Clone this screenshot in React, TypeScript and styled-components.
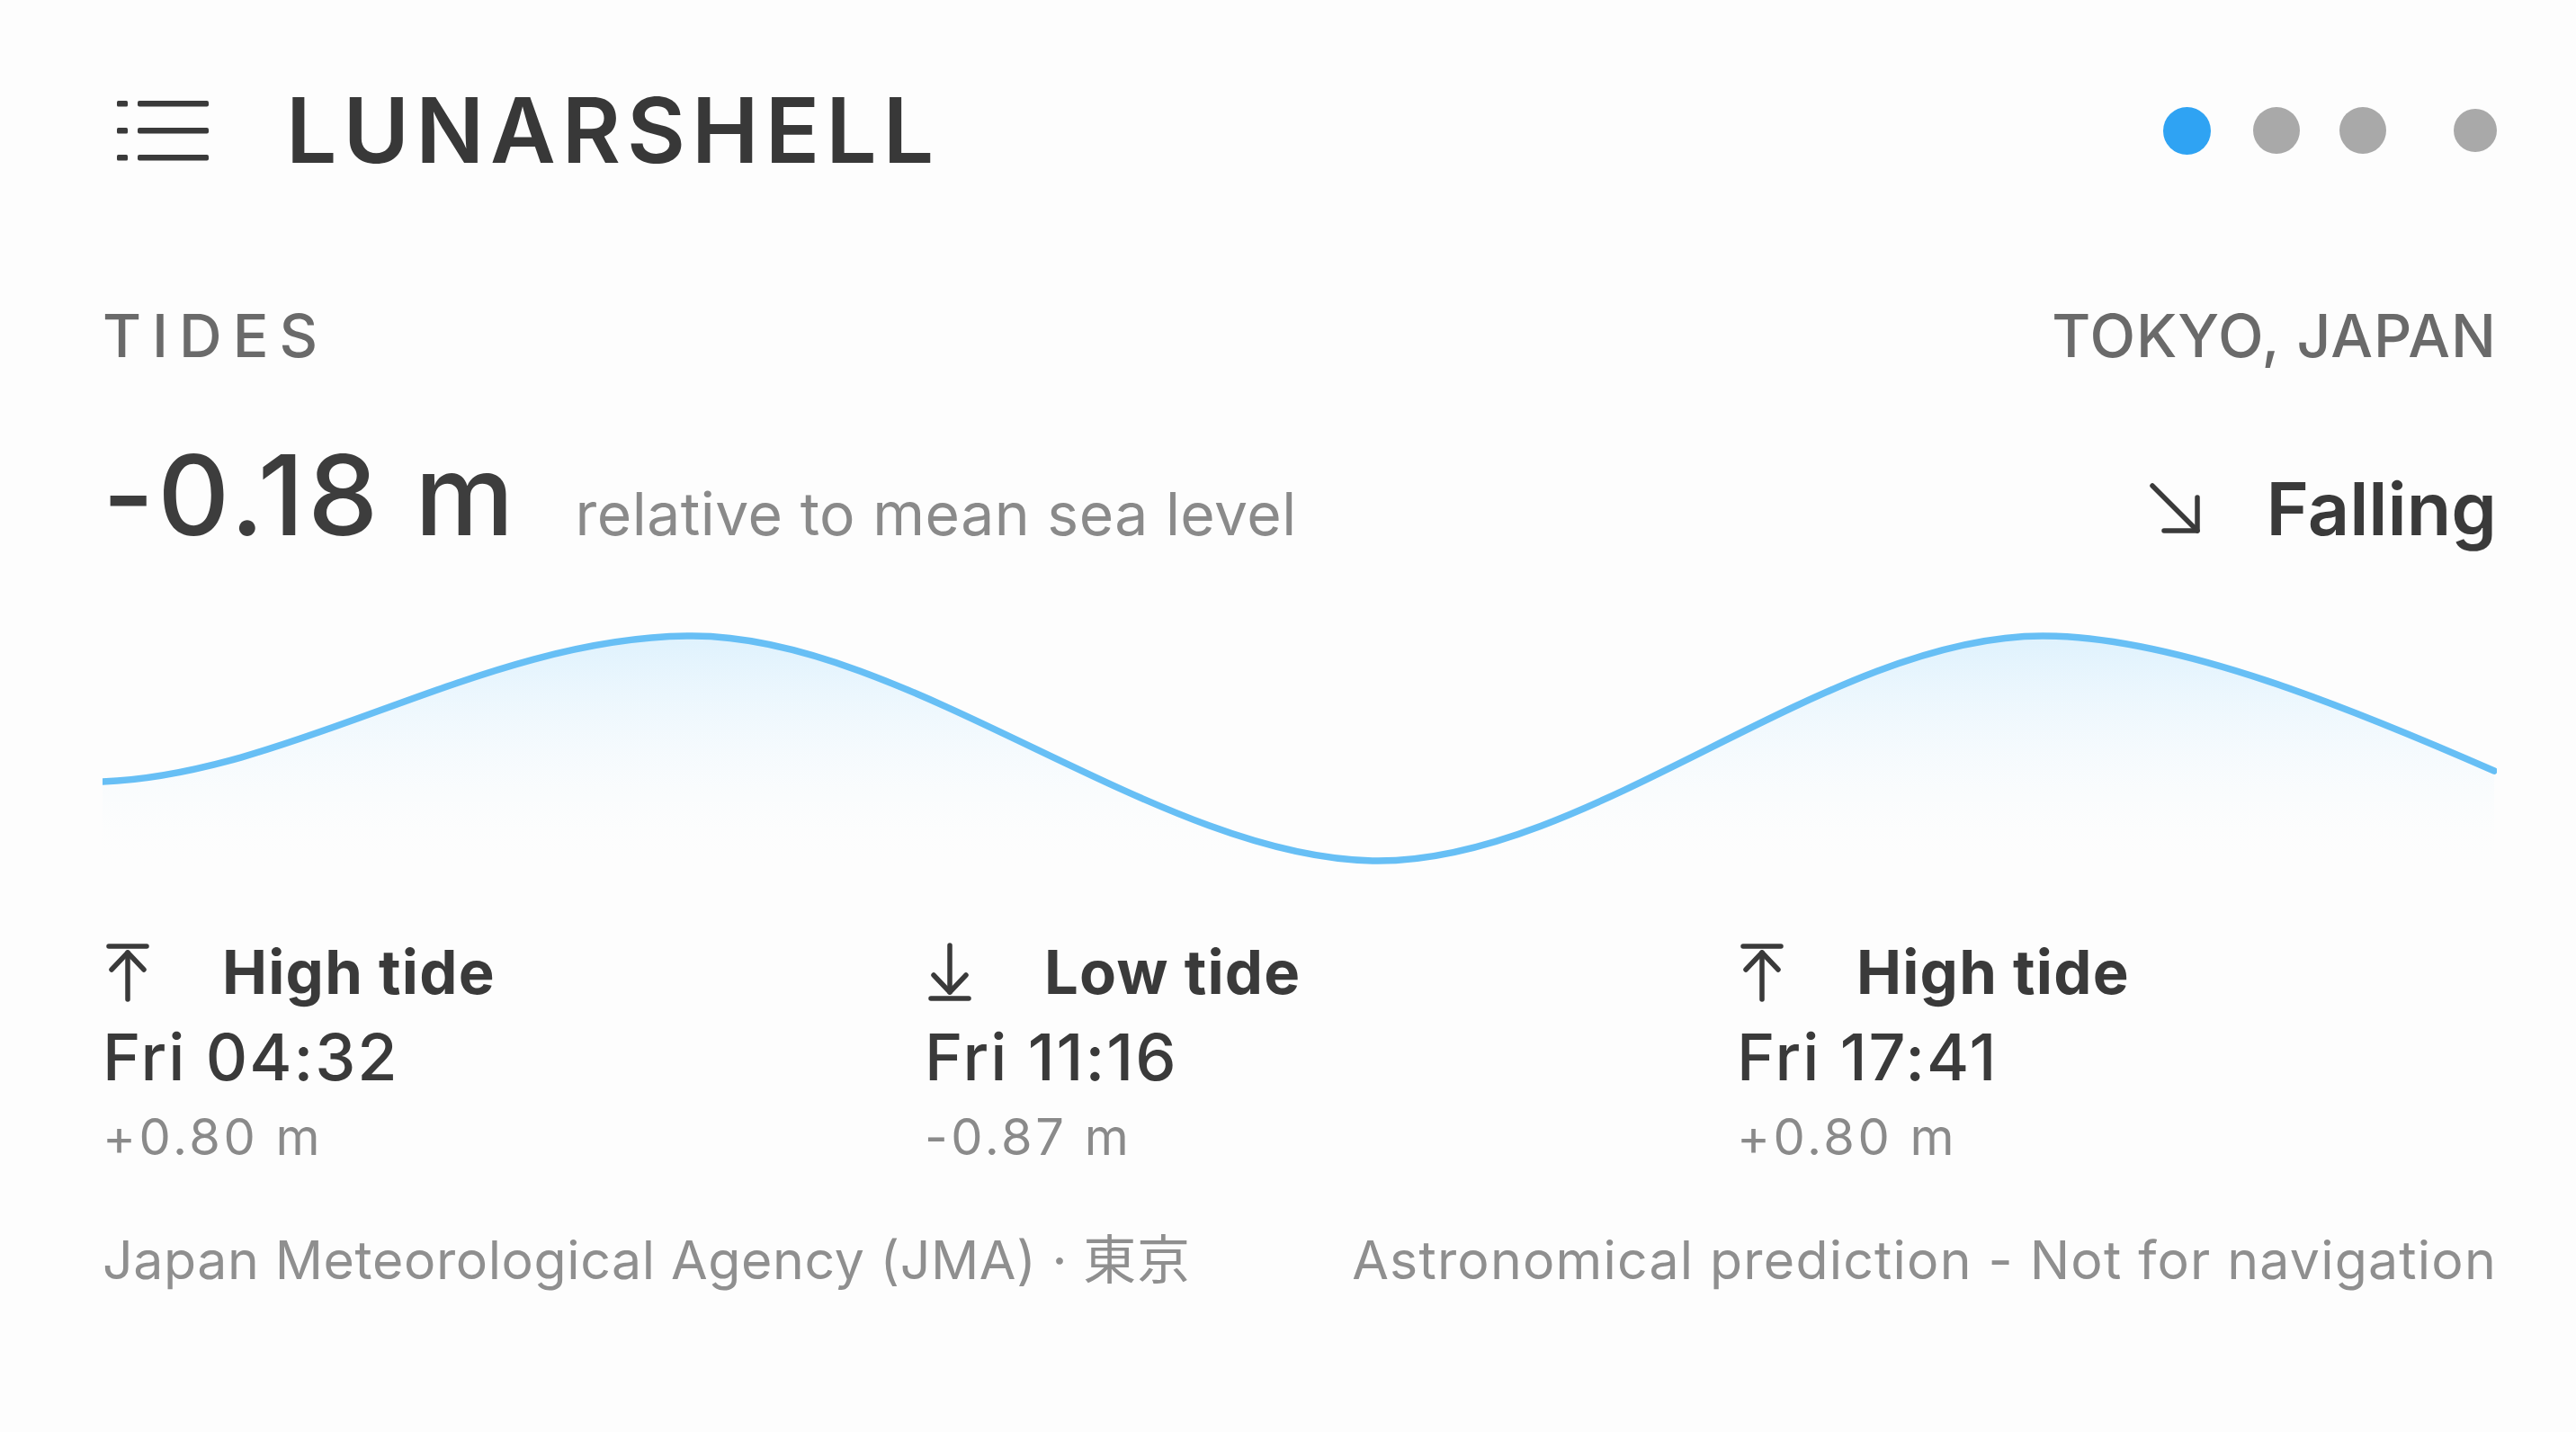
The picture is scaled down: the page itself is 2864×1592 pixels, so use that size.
import React from "react";
import styled, { createGlobalStyle } from "styled-components";

const GlobalStyle = createGlobalStyle`
  html, body {
    margin: 0;
    padding: 0;
    background: #fdfdfd;
  }
  body {
    font-family: Inter, "Noto Sans CJK JP", sans-serif;
    -webkit-font-smoothing: antialiased;
  }
`;

const Page = styled.div`
  width: 2864px;
  height: 1592px;
  box-sizing: border-box;
  padding: 95px 88px 0 114px;
  display: flex;
  flex-direction: column;
  background: #fdfdfd;
  overflow: hidden;
`;

// верхняя панель: меню, название, точки страниц
const Header = styled.header`
  display: flex;
  align-items: center;
  height: 100px;
`;

const MenuIcon = styled.svg`
  margin-left: 14px;
  flex-shrink: 0;
`;

const Title = styled.h1`
  margin: 0 0 0 84px;
  font-size: 100px;
  line-height: 1;
  font-weight: 600;
  letter-spacing: 7px;
  color: #383838;
`;

const Dots = styled.div`
  margin-left: auto;
  display: flex;
  align-items: center;
`;

const Dot = styled.span<{ $active?: boolean; $size: number; $gap: number }>`
  width: ${(p) => p.$size}px;
  height: ${(p) => p.$size}px;
  margin-left: ${(p) => p.$gap}px;
  border-radius: 50%;
  background: ${(p) => (p.$active ? "#2fa3f3" : "#a9a9a9")};
`;

const SectionRow = styled.div`
  margin-top: 145px;
  display: flex;
  justify-content: space-between;
  line-height: 1;
  font-size: 66px;
  font-weight: 500;
  color: #6a6a6a;
`;

const SectionLabel = styled.span<{ $spacing: number }>`
  letter-spacing: ${(p) => p.$spacing}px;
`;

const ValueRow = styled.div`
  margin-top: 82px;
  display: flex;
  align-items: baseline;
  justify-content: space-between;
  line-height: 1;
`;

const ValueGroup = styled.div`
  display: flex;
  align-items: baseline;
`;

const Level = styled.span`
  font-size: 124px;
  font-weight: 500;
  letter-spacing: 4px;
  color: #3d3d3d;
`;

const Relative = styled.span`
  margin-left: 64px;
  font-size: 66px;
  letter-spacing: 0.5px;
  color: #8a8a8a;
`;

const Trend = styled.span`
  margin-left: 72px;
  font-size: 81px;
  font-weight: 600;
  color: #3a3a3a;
`;

const Chart = styled.svg`
  display: block;
  margin-top: 83px;
`;

const TideGrid = styled.div`
  margin-top: 67px;
  display: grid;
  grid-template-columns: 914px 903px 1fr;
`;

const TideCol = styled.div`
  display: flex;
  flex-direction: column;
`;

const TideLabel = styled.div`
  display: flex;
  align-items: center;
  line-height: 1;
`;

const TideIcon = styled.svg`
  flex-shrink: 0;
  margin-left: 3px;
`;

const TideName = styled.span`
  margin-left: 80px;
  font-size: 67px;
  font-weight: 700;
  letter-spacing: 1.2px;
  color: #3a3a3a;
`;

const TideTime = styled.div`
  margin-top: 25px;
  font-size: 72px;
  line-height: 1;
  font-weight: 500;
  letter-spacing: 2px;
  color: #3a3a3a;
`;

const TideHeight = styled.div`
  margin-top: 25px;
  font-size: 56px;
  line-height: 1;
  letter-spacing: 3.5px;
  color: #8a8a8a;
`;

const Footer = styled.footer`
  margin-top: 79px;
  display: flex;
  justify-content: space-between;
  font-size: 59px;
  line-height: 1;
  color: #8f8f8f;
`;

const FooterNote = styled.span<{ $spacing: number }>`
  letter-spacing: ${(p) => p.$spacing}px;
`;

const dots = [
  { size: 53, gap: 0, active: true },
  { size: 52, gap: 47 },
  { size: 52, gap: 44 },
  { size: 48, gap: 75 },
];

const tides = [
  { kind: "high", name: "High tide", time: "Fri 04:32", height: "+0.80 m" },
  { kind: "low", name: "Low tide", time: "Fri 11:16", height: "-0.87 m" },
  { kind: "high", name: "High tide", time: "Fri 17:41", height: "+0.80 m" },
];

const wave =
  "M114 869 C330 860, 540 707, 770 707 C1010 707, 1290 957, 1532 957 C1770 957, 2030 707, 2271 707 C2420 707, 2620 790, 2773 857";

const TideArrow = ({ kind }: { kind: string }) => (
  <TideIcon width="50" height="66" viewBox="0 0 50 66" fill="none" stroke="#3a3a3a" strokeWidth="5.5" strokeLinecap="round" strokeLinejoin="round">
    {kind === "high" ? (
      <>
        <path d="M4 4H46" />
        <path d="M7 30L25 11L43 30" />
        <path d="M25 11V63" />
      </>
    ) : (
      <>
        <path d="M4 62H46" />
        <path d="M7 36L25 55L43 36" />
        <path d="M25 3V55" />
      </>
    )}
  </TideIcon>
);

export default function App() {
  return (
    <Page>
      <GlobalStyle />
      <Header>
        <MenuIcon width="106" height="68" viewBox="0 0 106 68" fill="#3a3a3a">
          <rect x="2" y="1" width="12" height="6.5" rx="1.5" />
          <rect x="2" y="31" width="12" height="6.5" rx="1.5" />
          <rect x="2" y="61" width="12" height="6.5" rx="1.5" />
          <rect x="25" y="1" width="79" height="6.5" rx="2" />
          <rect x="25" y="31" width="79" height="6.5" rx="2" />
          <rect x="25" y="61" width="79" height="6.5" rx="2" />
        </MenuIcon>
        <Title>LUNARSHELL</Title>
        <Dots>
          {dots.map((d, i) => (
            <Dot key={i} $active={d.active} $size={d.size} $gap={d.gap} />
          ))}
        </Dots>
      </Header>

      <SectionRow>
        <SectionLabel $spacing={12}>TIDES</SectionLabel>
        <SectionLabel $spacing={1}>TOKYO, JAPAN</SectionLabel>
      </SectionRow>

      <ValueRow>
        <ValueGroup>
          <Level>-0.18 m</Level>
          <Relative>relative to mean sea level</Relative>
        </ValueGroup>
        <ValueGroup>
          <svg width="60" height="60" viewBox="0 0 60 60" fill="none" stroke="#3a3a3a" strokeWidth="5.5" strokeLinecap="round" strokeLinejoin="round">
            <path d="M5 5L55 55" />
            <path d="M55 18V55H18" />
          </svg>
          <Trend>Falling</Trend>
        </ValueGroup>
      </ValueRow>

      <Chart width="2662" height="285" viewBox="114 695 2662 285">
        <defs>
          <linearGradient id="tideFill" x1="0" y1="705" x2="0" y2="975" gradientUnits="userSpaceOnUse">
            <stop offset="0" stopColor="#cdebfd" stopOpacity="0.65" />
            <stop offset="1" stopColor="#ffffff" stopOpacity="0" />
          </linearGradient>
        </defs>
        <path d={`${wave} L2773 980 L114 980 Z`} fill="url(#tideFill)" />
        <path d={wave} fill="none" stroke="#67bff5" strokeWidth="7.5" strokeLinecap="round" />
      </Chart>

      <TideGrid>
        {tides.map((t, i) => (
          <TideCol key={i}>
            <TideLabel>
              <TideArrow kind={t.kind} />
              <TideName>{t.name}</TideName>
            </TideLabel>
            <TideTime>{t.time}</TideTime>
            <TideHeight>{t.height}</TideHeight>
          </TideCol>
        ))}
      </TideGrid>

      <Footer>
        <FooterNote $spacing={0.6}>Japan Meteorological Agency (JMA) · 東京</FooterNote>
        <FooterNote $spacing={1.2}>Astronomical prediction - Not for navigation</FooterNote>
      </Footer>
    </Page>
  );
}
